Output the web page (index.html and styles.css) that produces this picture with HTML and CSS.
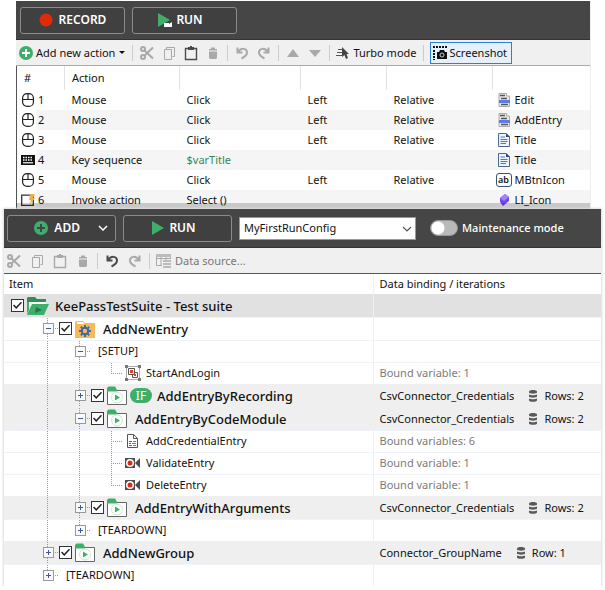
FILE: index.html
```html
<!DOCTYPE html>
<html lang="en">
<head>
<meta charset="utf-8">
<title>KeePassTestSuite</title>
<link rel="stylesheet" href="styles.css">
</head>
<body>
<svg class="defs" aria-hidden="true">
  <symbol id="cut" viewBox="0 0 16 16"><g fill="none" stroke="currentColor" stroke-width="2"><circle cx="4" cy="4" r="2"/><circle cx="4" cy="12" r="2"/><path d="M5.500 5.500 14 13.500M5.500 10.500 14 2.500"/></g></symbol>
  <symbol id="copy" viewBox="0 0 16 16"><path d="M5.500 4.500V2.500H13.500V11.500H11.500M3.500 4.500H10.500V14.500H3.500Z" fill="none" stroke="currentColor"/></symbol>
  <symbol id="paste" viewBox="0 0 16 16"><path d="M2.500 3.500H13.500V14.500H2.500Z" fill="none" stroke="currentColor" stroke-width="1.400"/><path d="M5 2H7V1H9V2H11V5H5Z" fill="currentColor"/></symbol>
  <symbol id="trash" viewBox="0 0 16 16"><path d="M4 4H6V2.500H10V4H12V5.500H4ZM4 6.500H12V13L11 14H5L4 13Z" fill="currentColor"/></symbol>
  <symbol id="undo" viewBox="0 0 16 16"><path d="M3.500 2.500V7.500H8.500M4 7C7 2.500 13 3 13 7.500C13 10.500 10.500 12 7.500 13.500" fill="none" stroke="currentColor" stroke-width="2"/></symbol>
  <symbol id="redo" viewBox="0 0 16 16"><path d="M12.500 2.500V7.500H7.500M12 7C9 2.500 3 3 3 7.500C3 10.500 5.500 12 8.500 13.500" fill="none" stroke="currentColor" stroke-width="2"/></symbol>
  <symbol id="up" viewBox="0 0 16 16"><path d="M8 4 14 12H2Z" fill="currentColor"/></symbol>
  <symbol id="down" viewBox="0 0 16 16"><path d="M8 12 14 5H2Z" fill="currentColor"/></symbol>
  <symbol id="plus" viewBox="0 0 14 14"><circle cx="7" cy="7" r="7" fill="#3fae6a"/><path d="M7 3V11M3 7H11" stroke="#fff" stroke-width="2"/></symbol>
  <symbol id="add" viewBox="0 0 14 14"><circle cx="7" cy="7" r="7" fill="#3fae6a"/><path d="M7 3V11M3 7H11" stroke="#464646" stroke-width="2"/></symbol>
  <symbol id="mouse" viewBox="0 0 14 16"><g fill="none" stroke="#222" stroke-width="1.200"><rect x="1.600" y="1.600" width="10.800" height="12.800" rx="4.500"/><path d="M1.600 7.500H12.400M7 1.600V7.500"/></g></symbol>
  <symbol id="keys" viewBox="0 0 14 16"><path d="M0 3H14V13H0Z" fill="#111"/><path d="M2 5.500H12M2 8H12" stroke="#fff" stroke-width="1.300" stroke-dasharray="1.500 1"/><path d="M2 10.800H12" stroke="#fff" stroke-width="1.200"/></symbol>
  <symbol id="invoke" viewBox="0 0 14 16"><path d="M.7 3.200H12.300V13.300H.7Z" fill="#fff" stroke="#333" stroke-width="1.300"/><path d="M9 2H14L12 6H14L8.500 13L10 8H8Z" fill="#f3b04a"/></symbol>
  <symbol id="form" viewBox="0 0 16 16"><path d="M3 1.500H10.500V4H13.500V14.500H3Z" fill="#e9e9e9" stroke="#aaa"/><path d="M4 3.500H9M5 6.500H11M5 12.500H12" stroke="#555" stroke-width="1.500"/><path d="M3 8H14V11H3Z" fill="#5b7be8"/></symbol>
  <symbol id="text" viewBox="0 0 16 16"><path d="M2.500 1.500H10L13.500 5V14.500H2.500Z" fill="#edf3fd" stroke="#4e6993"/><path d="M10 1V5H14" fill="#28497b"/><path d="M4.500 5H9M4.500 7.500H11.500M4.500 9.500H11.500M4.500 11.500H10" stroke="#4b78ce"/></symbol>
  <symbol id="gem" viewBox="0 0 16 16"><path d="M9 2 13 5V9L7 14 4 10V6Z" fill="#7045f0"/><path d="M9 2 13 5 8 9 4 6Z" fill="#9a86f4"/></symbol>
  <symbol id="module" viewBox="0 0 22 20"><path d="M1 4V2L2.500 .5H9L11 4Z" fill="#3fae6a"/><path d="M1.500 4.500H20.500V18.500H1.500Z" fill="#fff" stroke="#666"/><path d="M1 4H11V5.500H1Z" fill="#3fae6a"/><circle cx="11" cy="11.500" r="5.500" fill="#fff" stroke="#c7e6d2"/><path d="M9 8.500 14 11.500 9 14.500Z" fill="#3fae6a"/></symbol>
  <symbol id="db" viewBox="0 0 10 14"><g fill="#5a5a5a"><path d="M1 2.500C1 .5 9 .5 9 2.500V3.500C9 5 1 5 1 3.500ZM1 5.500C3 6.500 7 6.500 9 5.500V7.500C9 9 1 9 1 7.500ZM1 9.500C3 10.500 7 10.500 9 9.500V11.500C9 13.200 1 13.200 1 11.500Z"/></g></symbol>
  <symbol id="rec" viewBox="0 0 16 16"><path d="M0 3H10V13H0ZM10 8 15 3V13Z" fill="#4d4d4d"/><circle cx="5" cy="8" r="4" fill="#fff"/><circle cx="5" cy="8" r="2.500" fill="#e02b12"/></symbol>
</svg>

<main>
<section class="panel recorder">
  <div class="bar">
    <button class="big"><svg width="14" height="14" viewBox="0 0 14 14"><circle cx="7" cy="7" r="6.500" fill="#e12a06"/></svg>RECORD</button>
    <button class="big run"><svg width="14" height="14" viewBox="0 0 14 14"><path d="M0 0 12 7 0 14Z" fill="#3fae6a"/><path d="M6 10H11V11L14 9V14H6Z" fill="#fff"/></svg>RUN</button>
  </div>
  <div class="tools">
    <button class="tool"><svg width="14" height="14"><use href="#plus"/></svg>Add new action<svg width="8" height="6" viewBox="0 0 8 6"><path d="M1 1H7L4 4Z" fill="#111"/></svg></button>
    <i class="sep"></i>
    <button class="tool off" aria-label="Cut"><svg width="16" height="16"><use href="#cut"/></svg></button>
    <button class="tool off" aria-label="Copy"><svg width="16" height="16"><use href="#copy"/></svg></button>
    <button class="tool on" aria-label="Paste"><svg width="16" height="16"><use href="#paste"/></svg></button>
    <button class="tool off" aria-label="Delete"><svg width="16" height="16"><use href="#trash"/></svg></button>
    <i class="sep"></i>
    <button class="tool off" aria-label="Undo"><svg width="16" height="16"><use href="#undo"/></svg></button>
    <button class="tool off" aria-label="Redo"><svg width="16" height="16"><use href="#redo"/></svg></button>
    <i class="sep"></i>
    <button class="tool off" aria-label="Move up"><svg width="16" height="16"><use href="#up"/></svg></button>
    <button class="tool off" aria-label="Move down"><svg width="16" height="16"><use href="#down"/></svg></button>
    <i class="sep"></i>
    <button class="tool"><svg width="14" height="14" viewBox="0 0 14 14"><path d="M2 3.500H6M1 6.500H6M0 9.500H6" stroke="#555"/><path d="M6 1 13 8H10.500L12 12 10 13 8.500 9 6 11Z" fill="#444"/></svg>Turbo mode</button>
    <i class="sep"></i>
    <button class="tool picked"><svg width="14" height="14" viewBox="0 0 14 14"><path d="M0 1H14M1 4V14" stroke="#111" stroke-width="2" stroke-dasharray="2 1"/><path d="M4 6H6L7 4H11L12 6H14V13H4Z" fill="#111"/><circle cx="9" cy="9" r="2" fill="none" stroke="#ccc"/></svg>Screenshot</button>
  </div>
  <table class="steps">
    <colgroup><col class="c1"><col class="c2"><col class="c3"><col class="c4"><col class="c5"><col></colgroup>
    <thead><tr><th>#</th><th>Action</th><th></th><th></th><th></th><th></th></tr></thead>
    <tbody>
      <tr><td><div class="cell"><svg width="14" height="16"><use href="#mouse"/></svg>1</div></td><td>Mouse</td><td>Click</td><td>Left</td><td>Relative</td><td><div class="cell"><svg width="16" height="16"><use href="#form"/></svg>Edit</div></td></tr>
      <tr><td><div class="cell"><svg width="14" height="16"><use href="#mouse"/></svg>2</div></td><td>Mouse</td><td>Click</td><td>Left</td><td>Relative</td><td><div class="cell"><svg width="16" height="16"><use href="#form"/></svg>AddEntry</div></td></tr>
      <tr><td><div class="cell"><svg width="14" height="16"><use href="#mouse"/></svg>3</div></td><td>Mouse</td><td>Click</td><td>Left</td><td>Relative</td><td><div class="cell"><svg width="16" height="16"><use href="#text"/></svg>Title</div></td></tr>
      <tr><td><div class="cell"><svg width="14" height="16"><use href="#keys"/></svg>4</div></td><td>Key sequence</td><td class="var">$varTitle</td><td></td><td></td><td><div class="cell"><svg width="16" height="16"><use href="#text"/></svg>Title</div></td></tr>
      <tr><td><div class="cell"><svg width="14" height="16"><use href="#mouse"/></svg>5</div></td><td>Mouse</td><td>Click</td><td>Left</td><td>Relative</td><td><div class="cell"><span class="ab">ab</span>MBtnIcon</div></td></tr>
      <tr><td><div class="cell"><svg width="14" height="16"><use href="#invoke"/></svg>6</div></td><td>Invoke action</td><td>Select ()</td><td></td><td></td><td><div class="cell"><svg width="16" height="16"><use href="#gem"/></svg>LI_Icon</div></td></tr>
    </tbody>
  </table>
</section>

<section class="panel suite">
  <div class="bar">
    <button class="big menu"><svg width="14" height="14"><use href="#add"/></svg>ADD<svg class="more" width="10" height="6" viewBox="0 0 10 6"><path d="M1 1 5 5 9 1" fill="none" stroke="#fff" stroke-width="1.500"/></svg></button>
    <button class="big run"><svg width="14" height="14" viewBox="0 0 14 14"><path d="M1 0 13 7 1 14Z" fill="#3fae6a"/></svg>RUN</button>
    <span class="combo"><select aria-label="Run configuration"><option>MyFirstRunConfig</option></select><svg width="10" height="6" viewBox="0 0 10 6"><path d="M1 1 5 5 9 1" fill="none" stroke="#555" stroke-width="1.200"/></svg></span>
    <label class="switch"><input type="checkbox">Maintenance mode</label>
  </div>
  <div class="tools">
    <button class="tool off" aria-label="Cut"><svg width="16" height="16"><use href="#cut"/></svg></button>
    <button class="tool off" aria-label="Copy"><svg width="16" height="16"><use href="#copy"/></svg></button>
    <button class="tool off" aria-label="Paste"><svg width="16" height="16"><use href="#paste"/></svg></button>
    <button class="tool off" aria-label="Delete"><svg width="16" height="16"><use href="#trash"/></svg></button>
    <i class="sep"></i>
    <button class="tool on" aria-label="Undo"><svg width="16" height="16"><use href="#undo"/></svg></button>
    <button class="tool off" aria-label="Redo"><svg width="16" height="16"><use href="#redo"/></svg></button>
    <i class="sep"></i>
    <button class="tool source"><svg width="16" height="14" viewBox="0 0 16 14"><path d="M.5 1.500H14.500V5M.5 1.500V11.500H6M0 4.500H14M5 1V12M10 1V6" fill="none" stroke="#aaa"/><path d="M0 0H15V3H0ZM7 6H15V8H7ZM7 9H15V11H7ZM7 12H15V14H7Z" fill="#bbb"/></svg>Data source...</button>
  </div>
  <table class="tree">
    <colgroup><col><col class="binding"></colgroup>
    <thead><tr><th>Item</th><th>Data binding / iterations</th></tr></thead>
    <tbody>
      <tr class="root"><td><div class="node top"><input type="checkbox" id="n1" checked><svg width="24" height="20" viewBox="0 0 24 20"><path d="M1 18V2L2 1H9L11 3H20V8H1Z" fill="#2f8f55"/><path d="M3 6H20V10H3Z" fill="#fff"/><path d="M1 18V6H3V14Z" fill="#3fae6a"/><path d="M6 8H23L18 19H1Z" fill="#3fae6a"/><path d="M10 11 16 14 9 17Z" fill="#24774a"/></svg><label for="n1">KeePassTestSuite - Test suite</label></div></td><td></td></tr>
      <tr class="group"><td><div class="node"><span class="knob minus line"></span><input type="checkbox" id="n2" checked><svg width="22" height="20" viewBox="0 0 22 20"><path d="M1 19V3L2 2H9L11 4H21V19Z" fill="#f5b95a"/><path d="M3 3H9L10.500 5H3Z" fill="#fff"/><g fill="none" stroke="#3e69a8"><circle cx="11" cy="12" r="3.200" stroke-width="2"/><path d="M11 6V8M11 16V18M5 12H7M15 12H17M6.800 7.800 8.200 9.200M13.800 14.800 15.200 16.200M6.800 16.200 8.200 14.800M13.800 9.200 15.200 7.800" stroke-width="2"/></g></svg><label for="n2">AddNewEntry</label></div></td><td></td></tr>
      <tr><td><div class="node"><i class="rail"></i><span class="knob minus line"></span><span class="part">[SETUP]</span></div></td><td></td></tr>
      <tr><td><div class="node"><i class="rail"></i><i class="rail"></i><i class="twig last"></i><svg class="leaf" width="16" height="16" viewBox="0 0 16 16"><path d="M1.500 1.500H14.500V14.500H1.500Z" fill="none" stroke="#aaa"/><path d="M0 0H3V3H0ZM13 0H16V3H13ZM0 13H3V16H0ZM13 13H16V16H13Z" fill="#777"/><path d="M3.500 3.500H9.500V9.500H3.500ZM9.500 7.500H12.500V12.500H7.500V9.500" fill="none" stroke="#555"/><path d="M5 5H8V8H5ZM9 9H11V11H9Z" fill="#e03a22"/></svg><span>StartAndLogin</span></div></td><td><span class="bound">Bound variable: 1</span></td></tr>
      <tr class="group shade"><td><div class="node"><i class="rail"></i><span class="knob line"></span><input type="checkbox" id="n3" checked><svg width="22" height="20"><use href="#module"/></svg><span class="if">IF</span><label for="n3">AddEntryByRecording</label></div></td><td><div class="rows">CsvConnector_Credentials<svg width="10" height="14"><use href="#db"/></svg>Rows: 2</div></td></tr>
      <tr class="group shade"><td><div class="node"><i class="rail"></i><span class="knob minus line"></span><input type="checkbox" id="n4" checked><svg width="22" height="20"><use href="#module"/></svg><label for="n4">AddEntryByCodeModule</label></div></td><td><div class="rows">CsvConnector_Credentials<svg width="10" height="14"><use href="#db"/></svg>Rows: 2</div></td></tr>
      <tr><td><div class="node"><i class="rail"></i><i class="rail"></i><i class="twig"></i><svg class="leaf" width="16" height="16" viewBox="0 0 16 16"><path d="M2.500 1.500H8.500L12.500 5.500V14.500H2.500ZM8.500 1.500V5.500H12.500" fill="#fff" stroke="#555"/><path d="M4 8.500H7M4 10.500H6M4 12.500H7" stroke="#3e69a8"/><path d="M8 8.500H11M7 10.500H11M8 12.500H11" stroke="#777"/></svg><span>AddCredentialEntry</span></div></td><td><span class="bound">Bound variables: 6</span></td></tr>
      <tr><td><div class="node"><i class="rail"></i><i class="rail"></i><i class="twig"></i><svg class="leaf" width="16" height="16"><use href="#rec"/></svg><span>ValidateEntry</span></div></td><td><span class="bound">Bound variable: 1</span></td></tr>
      <tr><td><div class="node"><i class="rail"></i><i class="rail"></i><i class="twig last"></i><svg class="leaf" width="16" height="16"><use href="#rec"/></svg><span>DeleteEntry</span></div></td><td><span class="bound">Bound variable: 1</span></td></tr>
      <tr class="group shade"><td><div class="node"><i class="rail"></i><span class="knob line"></span><input type="checkbox" id="n5" checked><svg width="22" height="20"><use href="#module"/></svg><label for="n5">AddEntryWithArguments</label></div></td><td><div class="rows">CsvConnector_Credentials<svg width="10" height="14"><use href="#db"/></svg>Rows: 2</div></td></tr>
      <tr><td><div class="node"><i class="rail"></i><span class="knob last"></span><span class="part">[TEARDOWN]</span></div></td><td></td></tr>
      <tr class="group shade"><td><div class="node"><span class="knob line"></span><input type="checkbox" id="n6" checked><svg width="22" height="20"><use href="#module"/></svg><label for="n6">AddNewGroup</label></div></td><td><div class="rows">Connector_GroupName<svg width="10" height="14"><use href="#db"/></svg>Row: 1</div></td></tr>
      <tr><td><div class="node"><span class="knob last"></span><span class="part">[TEARDOWN]</span></div></td><td></td></tr>
    </tbody>
  </table>
</section>
</main>
</body>
</html>
```
FILE: styles.css
```css
* { box-sizing: border-box; }
body {
  margin: 0;
  background: #fff;
  color: #111;
  font: 11px/16px "Noto Sans", "Open Sans", sans-serif;
}
main { padding-top: 1px; }
svg { flex: none; display: block; }
.defs { position: absolute; width: 0; height: 0; }
button, select, input { font: inherit; margin: 0; }
table { width: 100%; border-collapse: collapse; table-layout: fixed; }
th { text-align: left; font-weight: 400; }
th, td { padding: 0 0 0 7px; white-space: nowrap; }

.panel { position: relative; background: #fff; }
.recorder { margin: 0 14px 0 16px; border-right: 1px solid #eee; }
.recorder::after {
  content: "";
  position: absolute;
  inset: auto 0 0 0;
  height: 7px;
  background: rgba(0, 0, 0, .18);
}
.suite {
  margin: -1px 4px 0;
  box-shadow: 0 0 2px 1px #ddd;
}

.bar {
  display: flex;
  align-items: center;
  gap: 7px;
  height: 39px;
  padding: 0 4px;
  background: #464646;
  border-bottom: 1px solid #333;
}
.suite .bar { padding: 0 3px; }
.big {
  display: flex;
  align-items: center;
  justify-content: center;
  gap: 6px;
  width: 105px;
  height: 27px;
  padding: 0;
  color: #fff;
  background: #404040;
  border: 1px solid #8b8b8b;
  border-radius: 3px;
  font-size: 12px;
  font-weight: 600;
}
.suite .big { width: 109px; }
.run { gap: 4px; padding-right: 8px; }
.menu { justify-content: flex-end; padding-right: 7px; }
.more { margin-left: 12px; }
.combo { position: relative; flex: 0 1 177px; }
.combo select {
  width: 100%;
  height: 23px;
  padding: 0 4px;
  appearance: none;
  background: #fff;
  color: #111;
  border: 1px solid #999;
  border-radius: 0;
}
.combo svg { position: absolute; right: 4px; top: 9px; pointer-events: none; }
.switch {
  display: flex;
  align-items: center;
  gap: 4px;
  margin-left: 7px;
  color: #fff;
  white-space: nowrap;
  font-weight: 500;
}
.switch input {
  appearance: none;
  width: 28px;
  height: 16px;
  border-radius: 8px;
  border: 1px solid #999;
  background: radial-gradient(circle at 7px 7px, #fff 6px, #b9b9b9 7px);
}

.tools {
  display: flex;
  align-items: center;
  gap: 6px;
  height: 26px;
  padding-left: 3px;
  background: #f0f0f0;
}
.recorder .tools { border-bottom: 1px solid #aaa; }
.suite .tools { gap: 7px; border-bottom: 1px solid #555; padding-left: 2px; }
.tool {
  display: flex;
  align-items: center;
  gap: 3px;
  padding: 0;
  border: 0;
  background: none;
  color: #111;
  white-space: nowrap;
}
.off { color: #a9a9a9; }
.on { color: #4b4b4b; }
.source { color: #777; }
.sep { width: 1px; height: 16px; background: #ccc; }
.suite .sep { margin: 0 -1px; }
.picked {
  height: 22px;
  padding: 0 4px 0 2px;
  border: 1px solid #2a80d8;
  background: #e5f0fa;
}

.steps { border-left: 1px solid #555; }
.steps th { height: 24px; border-left: 1px solid #e2e2e2; }
.steps th:first-child { border-left: 0; }
.steps td { height: 20px; }
.steps tbody tr:nth-child(even) { background: #f5f5f5; }
.steps td:first-child { padding-left: 4px; background: linear-gradient(90deg, #fff 19px, transparent 19px); }
.steps td:last-child { padding-left: 3px; }
.c1 { width: 48px; }
.c2 { width: 115px; }
.c3 { width: 121px; }
.c4 { width: 86px; }
.c5 { width: 106px; }
.cell { display: flex; align-items: center; gap: 3px; }
.var { color: #35895a; }
.ab {
  width: 16px;
  height: 14px;
  border: 1px solid #33557a;
  border-radius: 3px;
  font-size: 9px;
  line-height: 11px;
  font-weight: 600;
  text-align: center;
}

.binding { width: 228px; }
.tree th { height: 20px; padding-left: 5px; }
.tree td { height: 22px; padding: 0; border-top: 1px solid #f0f4fa; }
.tree th + th, .tree td + td { padding-left: 6px; border-left: 1px solid #edf0f6; }
.tree .root td, .tree .group td { height: 23px; }
.tree .root td { background: #e1e1e1; border-top-color: #e1e1e1; }
.tree .shade td { background: #efefef; border-top-color: #efefef; }
.node { display: flex; align-items: center; height: 21px; padding-left: 39px; }
.root .node, .group .node { height: 22px; }
.node.top { padding-left: 7px; }
.node label { margin-left: 7px; font-size: 13px; font-weight: 500; }
.top label { margin-left: 5px; }
.top svg { margin-left: 2px; }
.node input {
  appearance: none;
  flex: none;
  display: grid;
  place-items: center;
  width: 13px;
  height: 13px;
  margin-right: 2px;
  border: 1px solid #333;
  background: #fff;
}
.top input { margin-right: 0; }
.node input:checked::after {
  content: "";
  width: 9px;
  height: 8px;
  background: #222;
  clip-path: polygon(0 50%, 12% 38%, 36% 66%, 88% 4%, 100% 16%, 36% 94%);
}
.rail, .twig, .knob { flex: none; align-self: stretch; background-repeat: no-repeat; }
.rail {
  width: 32px;
  background-image: repeating-linear-gradient(#999 0 1px, transparent 1px 2px);
  background-position: 4px 0;
  background-size: 1px 100%;
}
.twig, .knob {
  width: 16px;
  background-image:
    repeating-linear-gradient(#999 0 1px, transparent 1px 2px),
    repeating-linear-gradient(90deg, #999 0 1px, transparent 1px 2px);
  background-position: 4px 0, 4px 50%;
  background-size: 1px 100%, 11px 1px;
}
.twig.last, .knob.last { background-size: 1px 50%, 11px 1px; }
.knob { display: flex; align-items: center; }
.knob::before {
  content: "";
  width: 9px;
  height: 9px;
  border: 1px solid #999;
  background:
    linear-gradient(#3c5a9c, #3c5a9c) center / 5px 1px no-repeat,
    linear-gradient(#3c5a9c, #3c5a9c) center / 1px 5px no-repeat,
    #fafafa;
}
.knob.minus::before {
  background: linear-gradient(#3c5a9c, #3c5a9c) center / 5px 1px no-repeat, #fafafa;
}
.part { margin-left: 7px; }
.leaf { margin: 0 5px 0 2px; }
.bound { color: #7b7b7b; }
.if {
  width: 22px;
  height: 15px;
  margin-left: 2px;
  border-radius: 8px;
  background: #3fae6a;
  color: #fff;
  font-size: 12px;
  line-height: 15px;
  text-align: center;
}
.if + label { margin-left: 5px; }
.rows { display: flex; align-items: center; }
.rows svg { margin: 0 6px 0 14px; }
```
